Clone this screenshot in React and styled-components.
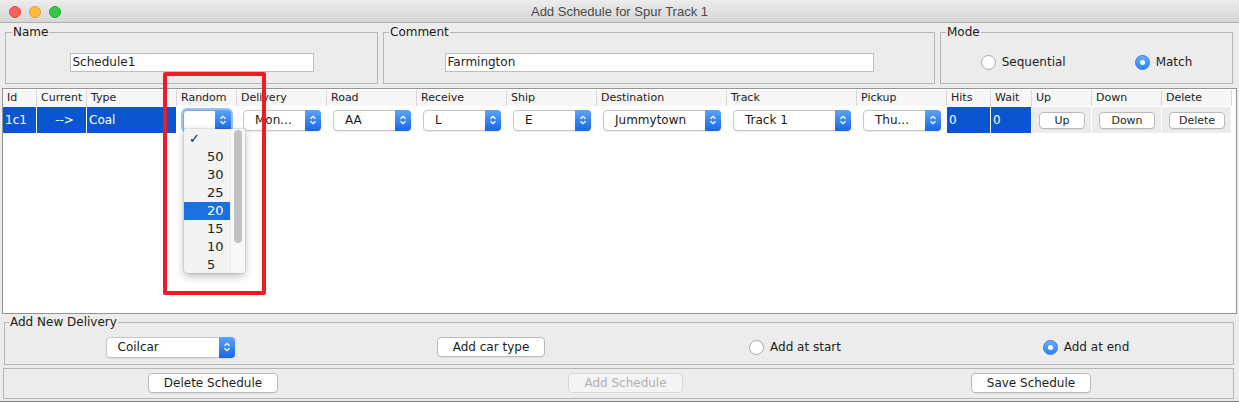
import React from "react";
import styled, { createGlobalStyle, css } from "styled-components";

const GlobalStyle = createGlobalStyle`
  html, body {
    margin: 0;
    padding: 0;
    background: #ececec;
  }
  body {
    font-family: "DejaVu Sans", "Liberation Sans", sans-serif;
    font-size: 12px;
    color: #1e1e1e;
  }
  * {
    box-sizing: border-box;
  }
`;

const Window = styled.div`
    position: relative;
    width: 1239px;
    height: 402px;
    display: flex;
    flex-direction: column;
    background: #ececec;
    overflow: hidden;
    border-bottom: 1px solid #7a7a7a;
`;

const TitleBar = styled.div`
    height: 23px;
    flex: none;
    display: grid;
    grid-template-columns: 1fr auto 1fr;
    align-items: center;
    background: linear-gradient(#ececec, #d5d5d5);
    border-bottom: 1px solid #b0b0b0;
    font-family: "Liberation Sans", Arial, sans-serif;
    font-size: 13px;
    color: #4a4a4a;
`;

const Lights = styled.div`
    display: flex;
    gap: 8px;
    padding: 1px 0 0 9px;
`;

const Light = styled.span`
    width: 12px;
    height: 12px;
    border-radius: 50%;
    background: ${(p) => p.color};
    border: 1px solid ${(p) => p.edge};
`;

const TopPanel = styled.div`
    height: 65px;
    flex: none;
    display: flex;
    gap: 5px;
    padding: 2px 0 0 5px;
`;

const Group = styled.fieldset`
    margin: 0;
    padding: 1px 0 0;
    min-width: 0;
    width: ${(p) => p.w}px;
    height: 59px;
    border: 1px solid #b6b6b6;
    display: flex;
    align-items: center;
    justify-content: center;
    gap: ${(p) => p.gap || 0}px;
`;

const Legend = styled.legend`
    margin-left: ${(p) => (p.inset !== undefined ? p.inset : 5)}px;
    padding: 0 1px;
    font-size: 12px;
    line-height: 15px;
    color: #1a1a1a;
`;

const TextField = styled.div`
    width: ${(p) => p.w}px;
    height: 19px;
    background: #fff;
    border: 1px solid #bfbfbf;
    padding-left: 2px;
    line-height: 17px;
    font-size: 12px;
`;

const RadioLabel = styled.label`
    display: flex;
    align-items: center;
    gap: 6px;
    font-size: 12px;
`;

const RadioCircle = styled.span`
    width: 15px;
    height: 15px;
    border-radius: 50%;
    flex: none;
    display: flex;
    align-items: center;
    justify-content: center;
    ${(p) =>
        p.checked
            ? css`
                  background: linear-gradient(#6aacfa, #2a84f5);
                  border: 1px solid #2b7fe9;
                  &::after {
                      content: "";
                      width: 5px;
                      height: 5px;
                      border-radius: 50%;
                      background: #fff;
                  }
              `
            : css`
                  background: #fff;
                  border: 1px solid #a8a8a8;
              `}
`;

const TablePane = styled.div`
    height: 226px;
    flex: none;
    margin: 0 2px;
    background: #fff;
    border: 1px solid #949494;
    padding-top: 1px;
`;

const HeaderRow = styled.div`
    display: flex;
    height: 16px;
    width: 1229px;
    background: #f6f6f6;
`;

const HeaderCell = styled.div`
    width: ${(p) => p.w}px;
    flex: none;
    padding-left: 4px;
    border-right: 1px solid #d9d9d9;
    font-size: 11px;
    line-height: 16px;
    color: #222;
    white-space: nowrap;
    overflow: hidden;
`;

const Row = styled.div`
    display: flex;
    height: 26px;
    margin-top: 1px;
`;

const Cell = styled.div`
    position: relative;
    width: ${(p) => p.w}px;
    flex: none;
    display: flex;
    align-items: center;
    border-right: 1px solid #fff;
    font-size: 12px;
    white-space: nowrap;
    ${(p) =>
        p.kind === "selected" &&
        css`
            background: #0b55d1;
            color: #fff;
            padding-left: 2px;
        `}
    ${(p) =>
        p.kind === "button" &&
        css`
            background: #ececec;
        `}
    ${(p) => p.center && css`justify-content: center; padding-left: 6px;`}
`;

const Combo = styled.div`
    display: flex;
    height: 21px;
    background: #fff;
    border: 1px solid #c6c6c6;
    border-radius: 4px;
    box-shadow: 0 1px 1px rgba(0, 0, 0, 0.08);
    ${(p) =>
        p.w
            ? css`
                  width: ${p.w}px;
                  flex: none;
              `
            : css`
                  flex: 1;
                  margin: 0 5px 0 6px;
              `}
    ${(p) =>
        p.focused &&
        css`
            border-color: #7aa7e9;
            box-shadow: 0 0 0 2px #9cc2f4;
        `}
`;

const ComboText = styled.span`
    flex: 1;
    min-width: 0;
    padding-left: 11px;
    line-height: 19px;
    font-size: 12px;
    color: #1a1a1a;
    overflow: hidden;
`;

const ComboArrow = styled.span`
    width: 16px;
    flex: none;
    margin: -1px -1px -1px 0;
    border-radius: 0 4px 4px 0;
    background: linear-gradient(#5aa4fb, #1767ea);
    display: flex;
    align-items: center;
    justify-content: center;
`;

const Button = styled.button`
    height: 20px;
    padding: 0 15px;
    font-family: "DejaVu Sans", sans-serif;
    font-size: 12px;
    color: #1e1e1e;
    background: #fff;
    border: 1px solid #bababa;
    border-radius: 4px;
    box-shadow: 0 1px 0 rgba(0, 0, 0, 0.05);
    white-space: nowrap;
    &:disabled {
        color: #b0b0b0;
        background: #f4f4f4;
        border-color: #d8d8d8;
        box-shadow: none;
    }
`;

const RowButton = styled(Button)`
    flex: 1;
    height: 17px;
    padding: 0;
    margin: 0 6px 0 7px;
    font-size: 11px;
    line-height: 15px;
`;

const Popup = styled.div`
    position: absolute;
    left: 7px;
    top: 22px;
    width: 61px;
    height: 144px;
    display: flex;
    background: #f3f3f3;
    border-radius: 0 0 4px 4px;
    box-shadow: 0 3px 8px rgba(0, 0, 0, 0.28), 0 0 0 1px rgba(0, 0, 0, 0.08);
    overflow: hidden;
    z-index: 2;
`;

const PopupList = styled.div`
    width: 46px;
    flex: none;
    padding-top: 1px;
`;

const PopupItem = styled.div`
    height: 18px;
    line-height: 18px;
    padding-left: ${(p) => (p.check ? 5 : 23)}px;
    font-size: 13px;
    color: #222;
    ${(p) =>
        p.active &&
        css`
            background: #1a6fe1;
            color: #fff;
        `}
`;

const ScrollTrack = styled.div`
    flex: 1;
    background: #f8f8f8;
    border-left: 1px solid #ececec;
    padding: 1px 3px 0 3px;
`;

const ScrollThumb = styled.div`
    height: 113px;
    border-radius: 4px;
    background: #c2c2c2;
`;

const Highlight = styled.div`
    position: absolute;
    left: 163px;
    top: 72px;
    width: 103px;
    height: 223px;
    border: 4px solid #ee1c24;
    border-radius: 2px;
    z-index: 3;
`;

const DeliveryGroup = styled.fieldset`
    margin: 1px 5px 0 4px;
    padding: 0;
    min-width: 0;
    height: 50px;
    border: 1px solid #b6b6b6;
    display: grid;
    grid-template-columns: 330px 312px 296px 286px;
    grid-template-rows: 34px;
    align-items: center;
    justify-items: center;
`;

const BottomPanel = styled.div`
    margin: 3px 5px 0 3px;
    height: 31px;
    flex: none;
    border: 1px solid #b6b6b6;
    display: grid;
    grid-template-columns: 418px 407px 1fr;
    align-items: center;
    justify-items: center;
    padding-bottom: 1px;
`;

const Chevrons = () => (
    <svg width="8" height="12" viewBox="0 0 8 12">
        <path d="M1.5 4.8 L4 2.3 L6.5 4.8 M1.5 7.2 L4 9.7 L6.5 7.2" fill="none" stroke="#fff" strokeWidth="1.3" />
    </svg>
);

const Select = ({ value, w, focused }) => (
    <Combo w={w} focused={focused}>
        <ComboText>{value}</ComboText>
        <ComboArrow>
            <Chevrons />
        </ComboArrow>
    </Combo>
);

const Radio = ({ label, checked }) => (
    <RadioLabel>
        <RadioCircle checked={checked} />
        {label}
    </RadioLabel>
);

const columns = [
    ["Id", 34],
    ["Current", 50],
    ["Type", 90],
    ["Random", 60],
    ["Delivery", 90],
    ["Road", 90],
    ["Receive", 90],
    ["Ship", 90],
    ["Destination", 130],
    ["Track", 130],
    ["Pickup", 90],
    ["Hits", 44],
    ["Wait", 41],
    ["Up", 60],
    ["Down", 70],
    ["Delete", 70],
];

const randomOptions = ["50", "30", "25", "20", "15", "10", "5"];

const App = () => {
    const w = (name) => columns.find((c) => c[0] === name)[1];

    return (
        <>
            <GlobalStyle />
            <Window>
                <TitleBar>
                    <Lights>
                        <Light color="#fc605c" edge="#e2463f" />
                        <Light color="#fdbc40" edge="#e0a028" />
                        <Light color="#34c84a" edge="#24a836" />
                    </Lights>
                    <span>Add Schedule for Spur Track 1</span>
                    <span />
                </TitleBar>

                <TopPanel>
                    <Group w={373}>
                        <Legend inset={6}>Name</Legend>
                        <TextField w={244}>Schedule1</TextField>
                    </Group>
                    <Group w={552}>
                        <Legend>Comment</Legend>
                        <TextField w={429}>Farmington</TextField>
                    </Group>
                    <Group w={293} gap={69}>
                        <Legend>Mode</Legend>
                        <Radio label="Sequential" />
                        <Radio label="Match" checked />
                    </Group>
                </TopPanel>

                <TablePane>
                    <HeaderRow>
                        {columns.map(([name, width]) => (
                            <HeaderCell key={name} w={width}>{name}</HeaderCell>
                        ))}
                    </HeaderRow>
                    <Row>
                        <Cell w={w("Id")} kind="selected">1c1</Cell>
                        <Cell w={w("Current")} kind="selected" center>--&gt;</Cell>
                        <Cell w={w("Type")} kind="selected">Coal</Cell>
                        <Cell w={w("Random")}>
                            <Select value="" focused />
                            <Popup>
                                <PopupList>
                                    <PopupItem check>✓</PopupItem>
                                    {randomOptions.map((o) => (
                                        <PopupItem key={o} active={o === "20"}>{o}</PopupItem>
                                    ))}
                                </PopupList>
                                <ScrollTrack>
                                    <ScrollThumb />
                                </ScrollTrack>
                            </Popup>
                        </Cell>
                        <Cell w={w("Delivery")}><Select value="Mon..." /></Cell>
                        <Cell w={w("Road")}><Select value="AA" /></Cell>
                        <Cell w={w("Receive")}><Select value="L" /></Cell>
                        <Cell w={w("Ship")}><Select value="E" /></Cell>
                        <Cell w={w("Destination")}><Select value="Jummytown" /></Cell>
                        <Cell w={w("Track")}><Select value="Track 1" /></Cell>
                        <Cell w={w("Pickup")}><Select value="Thu..." /></Cell>
                        <Cell w={w("Hits")} kind="selected">0</Cell>
                        <Cell w={w("Wait")} kind="selected">0</Cell>
                        <Cell w={w("Up")} kind="button"><RowButton>Up</RowButton></Cell>
                        <Cell w={w("Down")} kind="button"><RowButton>Down</RowButton></Cell>
                        <Cell w={w("Delete")} kind="button"><RowButton>Delete</RowButton></Cell>
                    </Row>
                </TablePane>

                <DeliveryGroup>
                    <Legend inset={4}>Add New Delivery</Legend>
                    <Select value="Coilcar" w={129} />
                    <Button>Add car type</Button>
                    <Radio label="Add at start" />
                    <Radio label="Add at end" checked />
                </DeliveryGroup>

                <BottomPanel>
                    <Button>Delete Schedule</Button>
                    <Button disabled>Add Schedule</Button>
                    <Button>Save Schedule</Button>
                </BottomPanel>

                <Highlight />
            </Window>
        </>
    );
};

export default App;
